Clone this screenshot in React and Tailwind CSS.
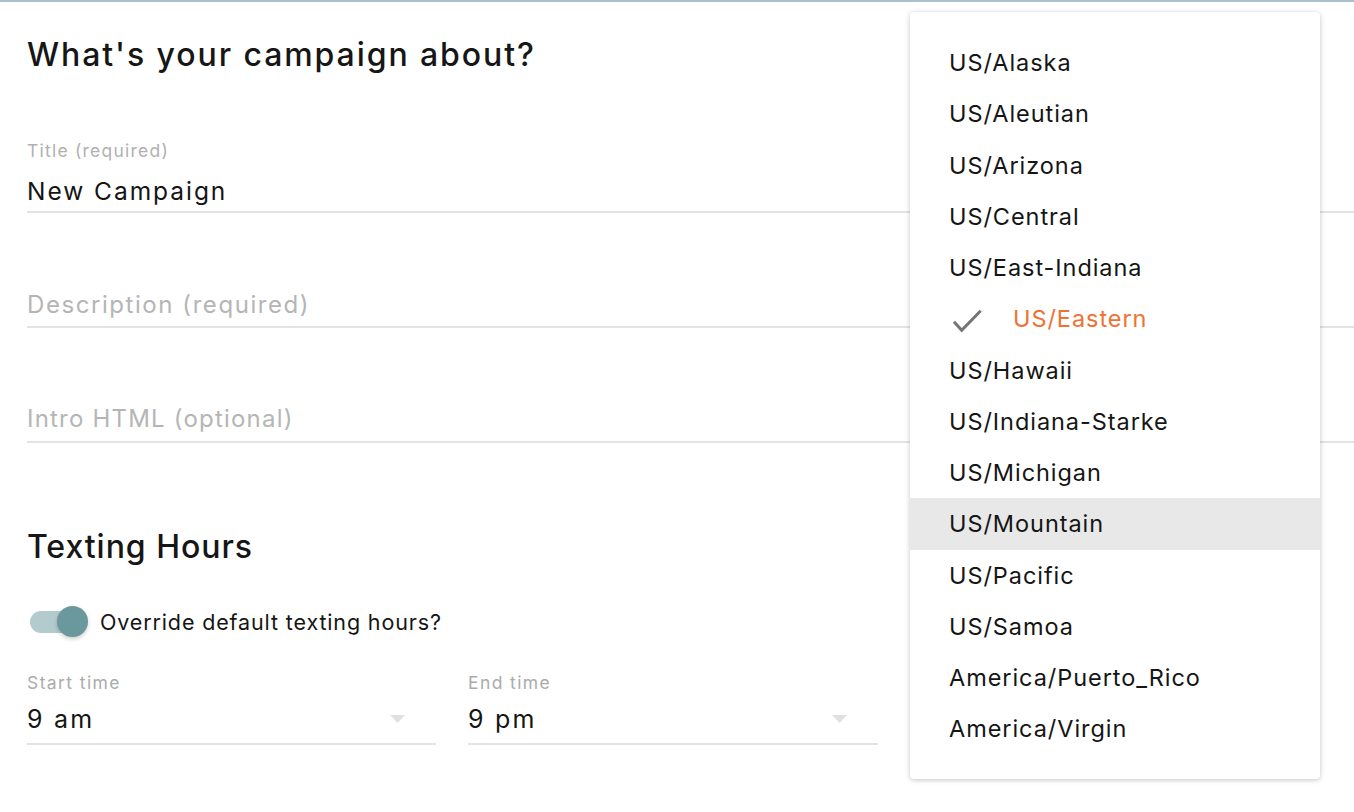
import React from "react";

const zones = [
  "US/Alaska",
  "US/Aleutian",
  "US/Arizona",
  "US/Central",
  "US/East-Indiana",
  "US/Eastern",
  "US/Hawaii",
  "US/Indiana-Starke",
  "US/Michigan",
  "US/Mountain",
  "US/Pacific",
  "US/Samoa",
  "America/Puerto_Rico",
  "America/Virgin",
];

function Arrow() {
  return (
    <svg width="15" height="8" viewBox="0 0 15 8">
      <polygon points="0,0 15,0 7.5,8" fill="#e0e0e0" />
    </svg>
  );
}

function Check() {
  return (
    <svg width="64" height="30" viewBox="0 0 64 30" className="shrink-0">
      <polyline
        points="5,17.7 12.7,26.2 31.7,6.7"
        fill="none"
        stroke="#757575"
        strokeWidth="3"
      />
    </svg>
  );
}

function TimeField({ label, value, width }) {
  return (
    <div className={width}>
      <div className="h-[20px] leading-[20px] text-[17.5px] tracking-[0.08em] text-[#ababab]">{label}</div>
      <div className="mt-[11px] h-[30px] flex items-center justify-between pr-[31px]">
        <span className="leading-[30px] text-[25px] tracking-[0.09em] text-[#151515]">{value}</span>
        <Arrow />
      </div>
      <div className="mt-[9px] h-[2px] bg-[#e3e3e1]" />
    </div>
  );
}

export default function App() {
  return (
    <div className="relative w-[1354px] h-[812px] overflow-hidden bg-white font-[Inter,sans-serif] text-[#151515]">
      <div className="h-[2px] bg-[#abc0cc]" />
      <div className="pl-[27px]">
        <h1 className="mt-[33px] h-[40px] leading-[40px] text-[32px] font-medium tracking-[0.06em] text-[#161616]">
          What's your campaign about?
        </h1>

        <div className="mt-[66px]">
          <div className="h-[20px] leading-[20px] text-[17.5px] tracking-[0.07em] text-[#b0b0b0]">Title (required)</div>
          <div className="mt-[15px] h-[30px] leading-[30px] text-[24.5px] tracking-[0.08em]">New Campaign</div>
          <div className="mt-[5px] h-[2px] bg-[#e3e3e1]" />
        </div>

        <div className="mt-[77px]">
          <div className="h-[30px] leading-[30px] text-[24px] tracking-[0.065em] text-[#b5b5b5]">Description (required)</div>
          <div className="mt-[6px] h-[2px] bg-[#e3e3e1]" />
        </div>

        <div className="mt-[76px]">
          <div className="h-[30px] leading-[30px] text-[24px] tracking-[0.05em] text-[#b5b5b5]">Intro HTML (optional)</div>
          <div className="mt-[7px] h-[2px] bg-[#e3e3e1]" />
        </div>

        <h2 className="mt-[84px] h-[40px] leading-[40px] text-[32px] font-medium tracking-[0.03em] text-[#161616]">
          Texting Hours
        </h2>

        <div className="mt-[37px] h-[36px] flex items-center">
          <div className="relative ml-[3px] w-[58px] h-[32px] shrink-0">
            <div className="absolute left-0 top-[5px] w-[55px] h-[22px] rounded-full bg-[#b3cbcf]" />
            <div className="absolute right-0 top-0 w-[31px] h-[31px] rounded-full bg-[#6a989c] shadow-[0_2px_4px_rgba(0,0,0,0.2)]" />
          </div>
          <span className="ml-[12px] text-[21.5px] tracking-[0.04em] text-[#151515]">Override default texting hours?</span>
        </div>

        <div className="mt-[33px] flex gap-[32px]">
          <TimeField label="Start time" value="9 am" width="w-[409px]" />
          <TimeField label="End time" value="9 pm" width="w-[410px]" />
        </div>
      </div>

      <div className="absolute left-[910px] top-[12px] w-[410px] h-[767px] bg-white rounded-[4px] shadow-[0_1px_6px_rgba(0,0,0,0.12),0_1px_4px_rgba(0,0,0,0.12)] pt-[25px]">
        {zones.map((z) => {
          const checked = z === "US/Eastern";
          const hover = z === "US/Mountain";
          return (
            <div
              key={z}
              className={
                "h-[51.25px] flex items-center pl-[39px] text-[23.5px] tracking-[0.04em] " +
                (hover ? "bg-[#e8e8e8] " : "") +
                (checked ? "text-[#ef7134]" : "text-[#151515]")
              }
            >
              {checked && <Check />}
              <span>{z}</span>
            </div>
          );
        })}
      </div>
    </div>
  );
}
